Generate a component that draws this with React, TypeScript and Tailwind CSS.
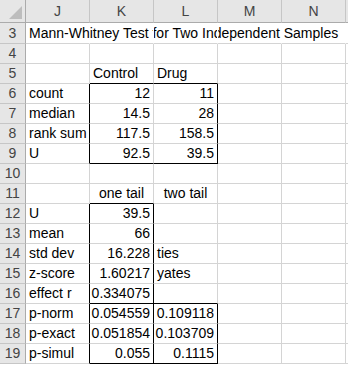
import React from 'react'

type Align = 'l' | 'r' | 'c'
type Cell = { v: string; a: Align }

const cols = ['J', 'K', 'L', 'M', 'N']

const L = (v: string): Cell => ({ v, a: 'l' })
const R = (v: string): Cell => ({ v, a: 'r' })
const C = (v: string): Cell => ({ v, a: 'c' })

// sheet content by row, columns J..N
const data: Record<number, (Cell | null)[]> = {
  3: [L('Mann-Whitney Test for Two Independent Samples')],
  4: [],
  5: [null, L('Control'), L('Drug')],
  6: [L('count'), R('12'), R('11')],
  7: [L('median'), R('14.5'), R('28')],
  8: [L('rank sum'), R('117.5'), R('158.5')],
  9: [L('U'), R('92.5'), R('39.5')],
  10: [],
  11: [null, C('one tail'), C('two tail')],
  12: [L('U'), R('39.5')],
  13: [L('mean'), R('66')],
  14: [L('std dev'), R('16.228'), L('ties')],
  15: [L('z-score'), R('1.60217'), L('yates')],
  16: [L('effect r'), R('0.334075')],
  17: [L('p-norm'), R('0.054559'), R('0.109118')],
  18: [L('p-exact'), R('0.051854'), R('0.103709')],
  19: [L('p-simul'), R('0.055'), R('0.1115')],
}

// black right edge: [row, colIndex]
const blackRight = (r: number, c: number) => {
  if (c === 0 && ((r >= 6 && r <= 9) || (r >= 12 && r <= 19))) return true
  if (c === 2 && r >= 6 && r <= 9) return true
  if (c === 1 && r >= 12 && r <= 19) return true
  if (c === 2 && r >= 17 && r <= 19) return true
  return false
}

const blackBottom = (r: number, c: number) => {
  if ((c === 1 || c === 2) && (r === 5 || r === 9)) return true
  if (c === 1 && (r === 11 || r === 16 || r === 19)) return true
  if (c === 2 && (r === 16 || r === 19)) return true
  return false
}

function SheetCell({ r, c }: { r: number; c: number }) {
  const cell = data[r]?.[c] ?? null
  const hideRight = r === 3
  const right = blackRight(r, c)
    ? 'border-r-black'
    : hideRight
      ? 'border-r-white'
      : 'border-r-[#d4d4d4]'
  const bottom = blackBottom(r, c) ? 'border-b-black' : 'border-b-[#d4d4d4]'
  const align =
    cell?.a === 'r' ? 'justify-end' : cell?.a === 'c' ? 'justify-center' : 'justify-start'
  return (
    <div
      className={`relative flex items-end border-r border-b ${right} ${bottom} ${align} px-[3px] pb-[1px] ${r === 3 ? 'h-[21px]' : 'h-[20px]'}`}
    >
      {cell && (
        <span className={`whitespace-nowrap leading-[18px] ${r === 3 ? 'absolute left-[3px] bottom-[1px]' : ''}`}>
          {cell.v}
        </span>
      )}
    </div>
  )
}

export default function App() {
  const rows = Array.from({ length: 17 }, (_, i) => i + 3)
  return (
    <div className="w-[348px] h-[365px] overflow-hidden bg-white text-black text-[14px] font-['Liberation_Sans',Arial,sans-serif]">
      <div className="grid grid-cols-[26px_64px_64px_64px_64px_64px_2px]">
        {/* header row */}
        <div className="relative h-[23px] bg-[#e6e6e6] border-r border-b border-[#ababab]">
          <div className="absolute right-[3px] bottom-[3px] w-0 h-0 border-l-[13px] border-l-transparent border-b-[13px] border-b-[#bdbdbd]" />
        </div>
        {cols.map((c) => (
          <div
            key={c}
            className="h-[23px] flex items-center justify-center bg-[#e6e6e6] border-r border-b border-r-[#c6c6c6] border-b-[#ababab] text-[#444]"
          >
            {c}
          </div>
        ))}
        <div className="h-[23px] bg-[#e6e6e6] border-b border-[#ababab]" />

        {rows.map((r) => (
          <React.Fragment key={r}>
            <div
              className={`flex items-end justify-center pb-[1px] bg-[#e6e6e6] border-r border-b border-r-[#ababab] border-b-[#c6c6c6] text-[#444] ${r === 3 ? 'h-[21px]' : 'h-[20px]'}`}
            >
              <span className="leading-[18px]">{r}</span>
            </div>
            {cols.map((_, ci) => (
              <SheetCell key={ci} r={r} c={ci} />
            ))}
            <div className={`border-b border-[#d4d4d4] ${r === 3 ? 'h-[21px]' : 'h-[20px]'}`} />
          </React.Fragment>
        ))}
      </div>
    </div>
  )
}
